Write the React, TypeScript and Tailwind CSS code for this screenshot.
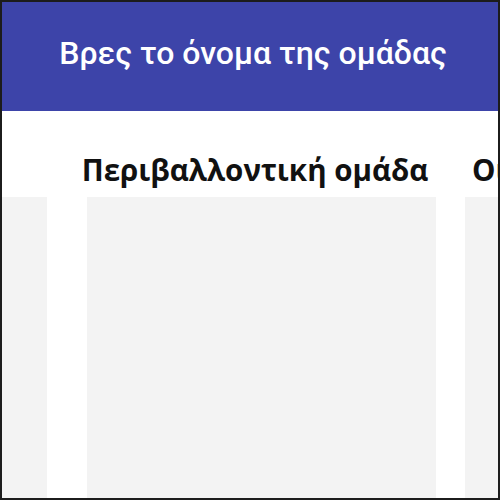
import React from "react";

const columns = ["Κοινωνική ομάδα", "Περιβαλλοντική ομάδα", "Οικονομική ομάδα"];

export default function App() {
  return (
    <div className="w-[500px] h-[500px] overflow-hidden border-2 border-[#1c1c1c] bg-white flex flex-col" style={{ fontFamily: "'Open Sans', 'DejaVu Sans', sans-serif" }}>
      <div className="h-[109px] shrink-0 bg-[#3d44a9] flex items-center justify-center pb-[8px] pl-[6px]">
        <h1 className="text-white text-[32px] font-medium leading-[36px]" style={{ fontFamily: "Roboto, 'Liberation Sans', sans-serif" }}>
          Βρες το όνομα της ομάδας
        </h1>
      </div>
      <div className="flex-1 overflow-hidden">
        <div className="flex ml-[-304px] pt-[43px]">
          <div className="w-[349px] shrink-0 flex flex-col items-center">
            <h2 className="text-[29.5px] font-bold text-[#111] h-[43px] leading-[32px] whitespace-nowrap mr-[60px]">{columns[0]}</h2>
            <div className="w-[349px] h-[320px] bg-[#f3f3f3]" />
          </div>
          <div className="w-[349px] shrink-0 ml-[40px] flex flex-col items-center">
            <h2 className="text-[29.5px] font-bold text-[#111] h-[43px] leading-[32px] whitespace-nowrap mr-[13px]">{columns[1]}</h2>
            <div className="w-[349px] h-[320px] bg-[#f3f3f3]" />
          </div>
          <div className="w-[349px] shrink-0 ml-[29px] flex flex-col items-start">
            <h2 className="text-[29.5px] font-bold text-[#111] h-[43px] leading-[32px] whitespace-nowrap pl-[7px]">{columns[2]}</h2>
            <div className="w-[349px] h-[320px] bg-[#f3f3f3]" />
          </div>
        </div>
      </div>
    </div>
  );
}
